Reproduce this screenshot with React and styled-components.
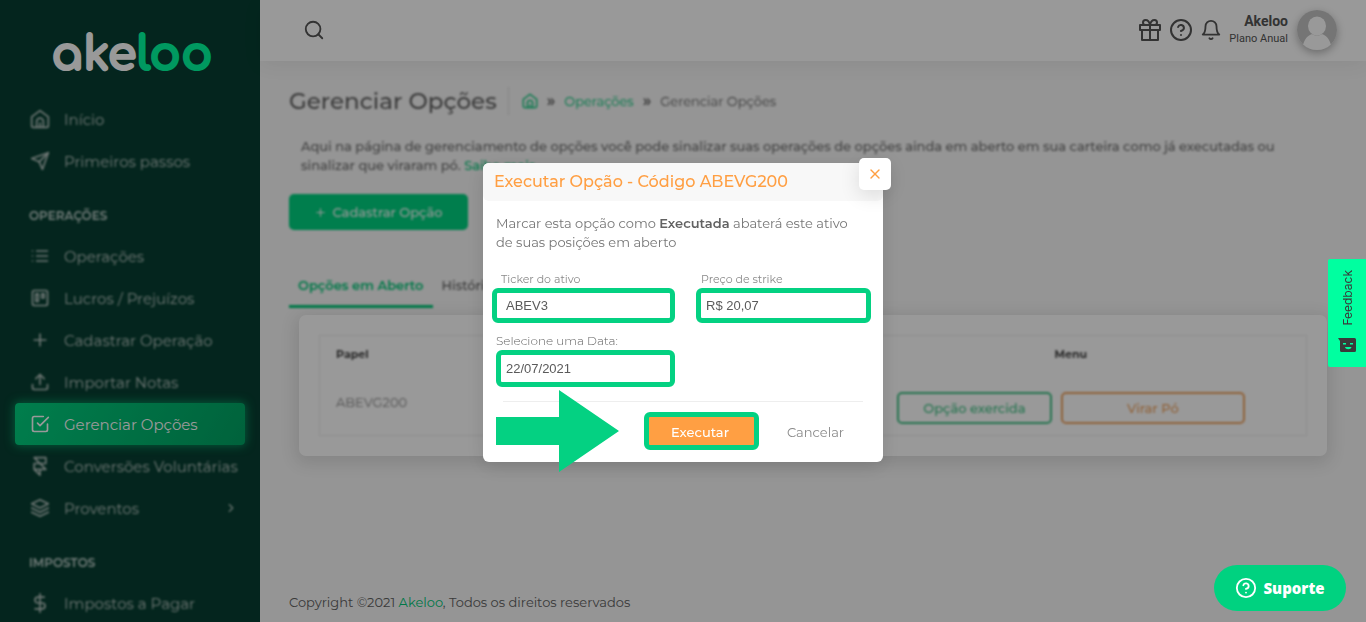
import React from "react";
import styled, { createGlobalStyle, css } from "styled-components";
import {
  FiSend,
  FiList,
  FiTrello,
  FiPlus,
  FiUpload,
  FiCheckSquare,
  FiFramer,
  FiLayers,
  FiDollarSign,
  FiChevronRight,
  FiSearch,
  FiGift,
  FiHelpCircle,
  FiBell,
  FiX,
} from "react-icons/fi";

const GlobalStyle = createGlobalStyle`
  * {
    box-sizing: border-box;
  }
  body {
    margin: 0;
    overflow: hidden;
    font-family: Montserrat, Inter, sans-serif;
    font-size: 13px;
    color: #626262;
    background: #f8f8f8;
  }
  button, input {
    font-family: inherit;
  }
  a {
    color: #00c878;
    text-decoration: none;
  }
`;

const soft = css`
  filter: blur(1px);
`;

const Page = styled.div`
  display: flex;
  height: 100vh;
`;

/* sidebar */
const Sidebar = styled.aside`
  flex: 0 0 260px;
  overflow: hidden;
  background: #073f32;
`;
const Logo = styled.a`
  display: flex;
  justify-content: center;
  height: 98px;
  padding: 25px 0 0 4px;
  font-family: Comfortaa, Quicksand, Inter, sans-serif;
  font-size: 47px;
  font-weight: 700;
  line-height: 60px;
  -webkit-text-stroke: 2px currentColor;
  color: #fff;
  & span {
    color: #00ffa0;
  }
`;
const MenuTitle = styled.h2`
  ${soft}
  margin: 0;
  padding: 25px 29px 10px;
  font-size: 12px;
  font-weight: 600;
  line-height: 18px;
  text-transform: uppercase;
  color: #c3d2ce;
`;
const MenuItem = styled.a`
  display: flex;
  align-items: center;
  gap: 14px;
  height: 42px;
  margin: 0 15px;
  padding: 0 7px 0 15px;
  border-radius: 4px;
  font-size: 15px;
  white-space: nowrap;
  color: #b7c5c1;
  ${(props) => !props.$active && soft}
  ${(props) =>
    props.$active &&
    css`
      color: #fff;
      background: linear-gradient(118deg, #00d280, #00a464);
      box-shadow: 0 0 10px 1px rgba(0, 210, 128, 0.6);
    `}
  & svg {
    flex: none;
    width: 20px;
    height: 20px;
  }
`;
const MenuLabel = styled.span`
  flex: 1;
`;
const Arrow = styled(FiChevronRight)`
  && {
    width: 14px;
    height: 14px;
  }
`;

/* top bar */
const Content = styled.div`
  display: flex;
  flex: 1;
  flex-direction: column;
  min-width: 0;
`;
const Topbar = styled.header`
  display: flex;
  align-items: center;
  justify-content: space-between;
  height: 61px;
  padding: 0 29px 1px 43px;
  background: #fff;
  box-shadow: 0 4px 20px rgba(0, 0, 0, 0.06);
`;
const IconButton = styled.button`
  display: flex;
  padding: 0;
  border: 0;
  background: none;
  color: #555;
`;
const TopbarRight = styled.div`
  display: flex;
  align-items: center;
  gap: 7px;
`;
const User = styled.div`
  display: flex;
  flex-direction: column;
  align-items: flex-end;
  margin-right: 2px;
  font-family: Roboto, sans-serif;
  font-size: 11px;
  line-height: 17px;
  color: #555;
  & strong {
    font-size: 14px;
  }
`;
const Avatar = styled.svg`
  width: 40px;
  height: 40px;
  border-radius: 50%;
  box-shadow: 0 3px 8px rgba(0, 0, 0, 0.3);
`;

/* main area */
const Main = styled.main`
  flex: 1;
  padding: 24px 29px 0;
`;
const TitleRow = styled.div`
  ${soft}
  display: flex;
  align-items: center;
  height: 32px;
`;
const Title = styled.h1`
  margin: 0;
  padding-right: 11px;
  border-right: 1px solid #e2e2e2;
  font-size: 23px;
  font-weight: 500;
  line-height: 28px;
  color: #636363;
`;
const Breadcrumb = styled.nav`
  display: flex;
  align-items: center;
  gap: 9px;
  padding-left: 13px;
  & svg {
    display: block;
    width: 16px;
    height: 16px;
  }
`;
const Separator = styled.span`
  font-size: 16px;
  font-weight: 600;
  line-height: 16px;
`;
const Intro = styled.p`
  ${soft}
  margin: 0;
  padding: 20px 36px 0 12px;
  font-weight: 500;
  line-height: 19px;
  color: #6e6e6e;
`;
const AddButton = styled.button`
  ${soft}
  display: flex;
  align-items: center;
  justify-content: center;
  gap: 5px;
  width: 179px;
  height: 36px;
  margin-top: 19px;
  border: 0;
  border-radius: 5px;
  font-size: 13px;
  font-weight: 500;
  color: #fff;
  background: #00d280;
`;
const Tabs = styled.div`
  ${soft}
  display: flex;
  margin-top: 38px;
`;
const Tab = styled.button`
  height: 40px;
  padding: 0 9px 4px;
  border: 0;
  border-bottom: 3px solid ${(props) => (props.$active ? "#00c878" : "transparent")};
  font-size: 13px;
  font-weight: ${(props) => (props.$active ? 600 : 500)};
  color: ${(props) => (props.$active ? "#00c878" : "#626262")};
  background: none;
`;
const Card = styled.section`
  margin: 7px 10px 0;
  padding: 20px;
  border-radius: 7px;
  background: #fff;
  box-shadow: 0 4px 16px 4px rgba(0, 0, 0, 0.1);
`;
const Table = styled.table`
  ${soft}
  width: 100%;
  border: 1px solid #ededed;
  border-collapse: collapse;
  & th {
    height: 37px;
    padding: 0 16px;
    font-size: 11px;
    font-weight: 700;
    text-align: left;
    color: #444;
  }
  & td {
    height: 63px;
    padding: 0 16px 4px;
    color: #8a8a8a;
  }
  & th:last-child {
    width: 48%;
    padding: 0 14px 0 17px;
    text-align: center;
  }
  & td:last-child {
    padding: 9px 14px 0 17px;
  }
`;
const RowActions = styled.div`
  display: flex;
  justify-content: center;
  gap: 9px;
`;
const OutlineButton = styled.button`
  width: ${(props) => (props.$wide ? "184px" : "155px")};
  height: 32px;
  border: 2px solid ${(props) => props.$color};
  border-radius: 5px;
  font-size: 13px;
  font-weight: 500;
  color: ${(props) => props.$color};
  background: none;
`;
const Footer = styled.footer`
  padding: 0 29px 11px;
  line-height: 18px;
`;

/* modal */
const Overlay = styled.div`
  position: fixed;
  inset: 0;
  display: flex;
  align-items: flex-start;
  justify-content: center;
  padding-top: 163px;
  background: rgba(0, 0, 0, 0.4);
`;
const Modal = styled.div`
  position: relative;
  width: 400px;
  border-radius: 6px;
  background: #fff;
  box-shadow: 0 5px 20px rgba(0, 0, 0, 0.12);
`;
const ModalTitle = styled.h3`
  margin: 0;
  padding: 0 11px;
  border-radius: 6px;
  font-size: 16px;
  font-weight: 500;
  line-height: 38px;
  color: #ff9f43;
  background: #f8f8f8;
`;
const CloseButton = styled.button`
  position: absolute;
  top: -5px;
  right: -8px;
  display: flex;
  align-items: center;
  justify-content: center;
  width: 32px;
  height: 32px;
  padding: 0;
  border: 0;
  border-radius: 5px;
  color: #ff9f43;
  background: #fff;
  box-shadow: 0 5px 20px rgba(0, 0, 0, 0.12);
`;
const ModalText = styled.p`
  margin: 0;
  padding: 13px 20px 18px 13px;
  line-height: 19px;
  color: #757575;
  & strong {
    font-weight: 600;
    color: #626262;
  }
`;
const Fields = styled.div`
  display: grid;
  grid-template-columns: 183px 175px;
  column-gap: 21px;
  padding-left: 9px;
`;
const Field = styled.label`
  display: flex;
  flex-direction: column;
  font-size: ${(props) => (props.$date ? "12px" : "11px")};
  font-weight: ${(props) => (props.$date ? 300 : 400)};
  line-height: 18px;
  padding-left: ${(props) => (props.$date ? "4px" : "0")};
  margin-top: ${(props) => (props.$date ? "9px" : "0")};
  color: ${(props) => (props.$date ? "#626262" : "#8a8a8a")};
  & span {
    padding-left: ${(props) => props.$indent || "0"};
  }
`;
const Input = styled.input`
  width: 100%;
  height: ${(props) => (props.$tall ? "37px" : "35px")};
  padding: 0 ${(props) => (props.$narrow ? "5px" : "9px")};
  border: 5px solid #04d182;
  border-radius: 6px;
  outline: 0;
  font-family: "Liberation Sans", Arial, sans-serif;
  font-size: 13px;
  color: #5a5a5a;
  background: #fff;
`;
const ModalFooter = styled.div`
  display: flex;
  align-items: center;
  height: 60px;
  margin-top: 14px;
  padding: 0 0 2px 13px;
`;
const Line = styled.hr`
  height: 1px;
  margin: 14px 20px -14px;
  border: 0;
  background: #eee;
`;
const Pointer = styled.svg`
  flex: none;
  width: 123px;
  height: 82px;
  fill: #04d182;
`;
const ConfirmButton = styled.button`
  width: 115px;
  height: 38px;
  margin-left: 25px;
  padding: 2px 3px 0 0;
  border: 5px solid #04d182;
  border-radius: 6px;
  font-size: 13px;
  font-weight: 500;
  color: #fff;
  background: #ff9f43;
`;
const CancelButton = styled.button`
  margin-left: 28px;
  padding: 2px 0 0;
  border: 0;
  font-size: 13px;
  color: #8a8a8a;
  background: none;
`;

/* floating widgets */
const Feedback = styled.button`
  position: fixed;
  top: 259px;
  right: 0;
  display: flex;
  flex-direction: column;
  align-items: center;
  justify-content: space-between;
  width: 38px;
  height: 108px;
  padding: 11px 0 14px;
  border: 0;
  border-radius: 2px 0 0 2px;
  font-family: Inter, sans-serif;
  font-size: 12px;
  color: #3a3a3a;
  background: #00ffa0;
  & span {
    writing-mode: vertical-rl;
    transform: rotate(180deg);
  }
`;
const Support = styled.button`
  position: fixed;
  right: 20px;
  bottom: 11px;
  display: flex;
  align-items: center;
  justify-content: center;
  gap: 6px;
  width: 132px;
  height: 46px;
  border: 0;
  border-radius: 23px;
  font-family: "Open Sans", sans-serif;
  font-size: 15px;
  font-weight: 800;
  color: #fff;
  background: #00d280;
`;

const HomeIcon = () => (
  <svg viewBox="0 0 24 24" fill="none" stroke="currentColor" strokeWidth="2" strokeLinecap="round" strokeLinejoin="round">
    <path d="M2 9.500 12 2l10 7.500V20a2 2 0 0 1-2 2H4a2 2 0 0 1-2-2z" />
    <path d="M8 22v-7a4 4 0 0 1 8 0v7M12 17v5" />
  </svg>
);

const FeedbackIcon = () => (
  <svg width="20" height="16" viewBox="0 0 20 16">
    <path d="M1 1h16.500a1.500 1.500 0 0 1 1.500 1.500v11a1.500 1.500 0 0 1-1.500 1.500H4.500A1.500 1.500 0 0 1 3 13.500V4z" fill="#3a3a3a" />
    <path d="M6 6h3v1.500H6zM13 6h3v1.500h-3zM8 10h6.500c-.5 3-6 3-6.500 0z" fill="#00ffa0" />
  </svg>
);

const operations = [
  { label: "Operações", icon: FiList },
  { label: "Lucros / Prejuízos", icon: FiTrello },
  { label: "Cadastrar Operação", icon: FiPlus },
  { label: "Importar Notas", icon: FiUpload },
  { label: "Gerenciar Opções", icon: FiCheckSquare, active: true },
  { label: "Conversões Voluntárias", icon: FiFramer },
  { label: "Proventos", icon: FiLayers, arrow: true },
];

const MenuLink = (props) => {
  const { label, icon: Icon, active, arrow } = props;
  return (
    <MenuItem href="#" $active={active}>
      <Icon />
      <MenuLabel>{label}</MenuLabel>
      {arrow && <Arrow />}
    </MenuItem>
  );
};

const App = () => {
  return (
    <>
      <GlobalStyle />
      <Page>
        <Sidebar>
          <Logo href="#">
            ake<span>loo</span>
          </Logo>
          <MenuLink label="Início" icon={HomeIcon} />
          <MenuLink label="Primeiros passos" icon={FiSend} />
          <MenuTitle>Operações</MenuTitle>
          {operations.map((item) => (
            <MenuLink key={item.label} {...item} />
          ))}
          <MenuTitle>Impostos</MenuTitle>
          <MenuLink label="Impostos a Pagar" icon={FiDollarSign} />
        </Sidebar>
        <Content>
          <Topbar>
            <IconButton aria-label="Buscar">
              <FiSearch size={22} />
            </IconButton>
            <TopbarRight>
              <IconButton aria-label="Presentes">
                <FiGift size={24} />
              </IconButton>
              <IconButton aria-label="Ajuda">
                <FiHelpCircle size={24} />
              </IconButton>
              <IconButton aria-label="Notificações">
                <FiBell size={22} />
              </IconButton>
              <User>
                <strong>Akeloo</strong>
                <span>Plano Anual</span>
              </User>
              <Avatar viewBox="0 0 40 40">
                <rect width="40" height="40" fill="#c4c4c4" />
                <ellipse cx="20" cy="16" rx="9" ry="9.500" fill="#fff" />
                <path d="M5 40c1-8 4-14 10-16 3 2 7 2 10 0 6 2 9 8 10 16z" fill="#fff" />
              </Avatar>
            </TopbarRight>
          </Topbar>
          <Main>
            <TitleRow>
              <Title>Gerenciar Opções</Title>
              <Breadcrumb>
                <a href="#" aria-label="Início">
                  <HomeIcon />
                </a>
                <Separator>»</Separator>
                <a href="#">Operações</a>
                <Separator>»</Separator>
                <span>Gerenciar Opções</span>
              </Breadcrumb>
            </TitleRow>
            <Intro>
              Aqui na página de gerenciamento de opções você pode sinalizar suas operações de opções
              ainda em aberto em sua carteira como já executadas ou sinalizar que viraram pó.{" "}
              <a href="#">Saiba mais</a>
            </Intro>
            <AddButton>
              <FiPlus /> Cadastrar Opção
            </AddButton>
            <Tabs>
              <Tab $active>Opções em Aberto</Tab>
              <Tab>Histórico</Tab>
            </Tabs>
            <Card>
              <Table>
                <thead>
                  <tr>
                    <th>Papel</th>
                    <th>Menu</th>
                  </tr>
                </thead>
                <tbody>
                  <tr>
                    <td>ABEVG200</td>
                    <td>
                      <RowActions>
                        <OutlineButton $color="#3fc184">Opção exercida</OutlineButton>
                        <OutlineButton $wide $color="#f0a460">
                          Virar Pó
                        </OutlineButton>
                      </RowActions>
                    </td>
                  </tr>
                </tbody>
              </Table>
            </Card>
          </Main>
          <Footer>
            Copyright ©2021 <a href="#">Akeloo</a>, Todos os direitos reservados
          </Footer>
        </Content>
      </Page>

      <Overlay>
        <Modal role="dialog" aria-labelledby="modal-title">
          <ModalTitle id="modal-title">Executar Opção - Código ABEVG200</ModalTitle>
          <CloseButton aria-label="Fechar">
            <FiX size={16} />
          </CloseButton>
          <ModalText>
            Marcar esta opção como <strong>Executada</strong> abaterá este ativo de suas posições em
            aberto
          </ModalText>
          <Fields>
            <Field $indent="9px">
              <span>Ticker do ativo</span>
              <Input defaultValue="ABEV3" />
            </Field>
            <Field $indent="5px">
              <span>Preço de strike</span>
              <Input $narrow defaultValue="R$ 20,07" />
            </Field>
            <Field $date>
              <span>Selecione uma Data:</span>
              <Input $tall $narrow defaultValue="22/07/2021" />
            </Field>
          </Fields>
          <Line />
          <ModalFooter>
            <Pointer viewBox="0 0 123 82">
              <polygon points="0,27 63,27 63,0 123,41 63,82 63,55 0,55" />
            </Pointer>
            <ConfirmButton>Executar</ConfirmButton>
            <CancelButton>Cancelar</CancelButton>
          </ModalFooter>
        </Modal>
      </Overlay>

      <Feedback>
        <span>Feedback</span>
        <FeedbackIcon />
      </Feedback>
      <Support>
        <FiHelpCircle size={22} />
        Suporte
      </Support>
    </>
  );
};

export default App;
